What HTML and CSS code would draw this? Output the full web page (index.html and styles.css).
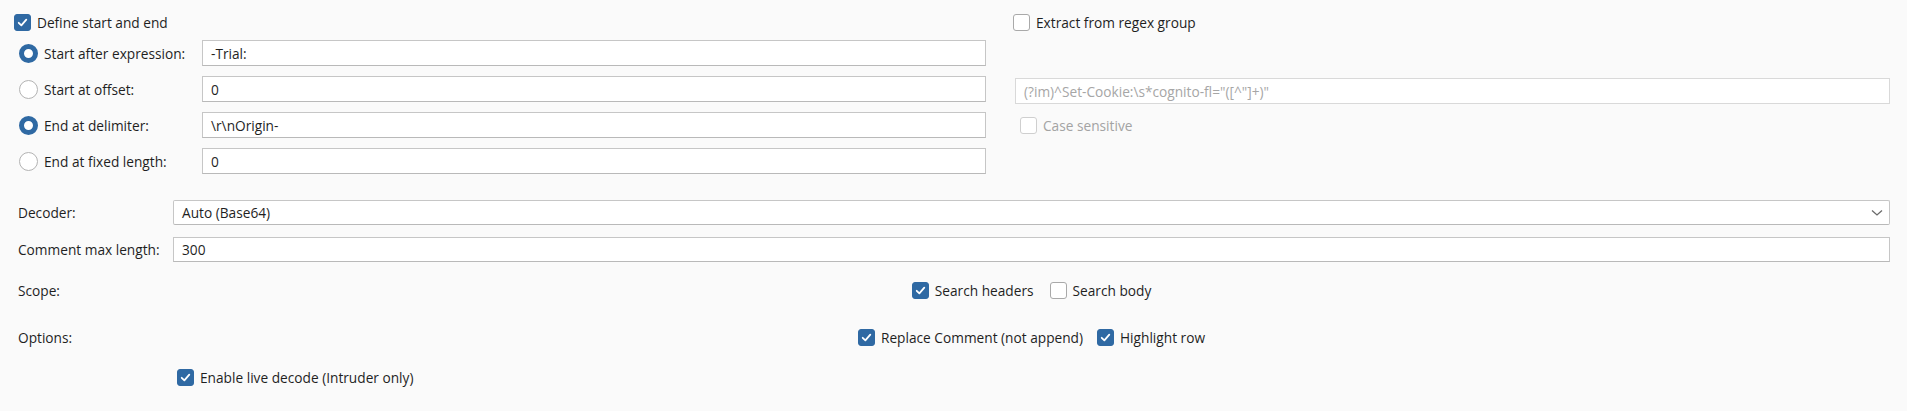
FILE: index.html
```html
<!DOCTYPE html>
<html>
<head>
<meta charset="utf-8">
<link rel="stylesheet" href="styles.css">
</head>
<body>
<div class="panel">
  <div class="top">
    <div class="col-left">
      <div class="check-row head">
        <span class="cb on"><svg viewBox="0 0 17 17"><path d="M4.2 8.8 L7.2 11.8 L12.8 5.2"/></svg></span>
        <span class="lbl">Define start and end</span>
      </div>
      <div class="opt-row">
        <div class="opt"><span class="radio on"></span><span class="lbl">Start after expression:</span></div>
        <div class="field">-Trial:</div>
      </div>
      <div class="opt-row">
        <div class="opt"><span class="radio"></span><span class="lbl">Start at offset:</span></div>
        <div class="field">0</div>
      </div>
      <div class="opt-row">
        <div class="opt"><span class="radio on"></span><span class="lbl">End at delimiter:</span></div>
        <div class="field">\r\nOrigin-</div>
      </div>
      <div class="opt-row">
        <div class="opt"><span class="radio"></span><span class="lbl">End at fixed length:</span></div>
        <div class="field">0</div>
      </div>
    </div>
    <div class="col-right">
      <div class="check-row head">
        <span class="cb"></span>
        <span class="lbl">Extract from regex group</span>
      </div>
      <div class="field disabled regex">(?im)^Set-Cookie:\s*cognito-fl="([^"]+)"</div>
      <div class="check-row case">
        <span class="cb dis"></span>
        <span class="lbl dim">Case sensitive</span>
      </div>
    </div>
  </div>

  <div class="form-row decoder">
    <div class="flabel">Decoder:</div>
    <div class="field select">Auto (Base64)<svg class="chev" viewBox="0 0 12 8"><path d="M1 1.5 L6 6 L11 1.5"/></svg></div>
  </div>
  <div class="form-row comment">
    <div class="flabel">Comment max length:</div>
    <div class="field">300</div>
  </div>
  <div class="form-row scope">
    <div class="flabel">Scope:</div>
    <div class="center-group">
      <div class="check-row"><span class="cb on"><svg viewBox="0 0 17 17"><path d="M4.2 8.8 L7.2 11.8 L12.8 5.2"/></svg></span><span class="lbl">Search headers</span></div>
      <div class="check-row"><span class="cb"></span><span class="lbl">Search body</span></div>
    </div>
  </div>
  <div class="form-row options">
    <div class="flabel">Options:</div>
    <div class="center-group">
      <div class="check-row"><span class="cb on"><svg viewBox="0 0 17 17"><path d="M4.2 8.8 L7.2 11.8 L12.8 5.2"/></svg></span><span class="lbl">Replace Comment (not append)</span></div>
      <div class="check-row"><span class="cb on"><svg viewBox="0 0 17 17"><path d="M4.2 8.8 L7.2 11.8 L12.8 5.2"/></svg></span><span class="lbl">Highlight row</span></div>
    </div>
  </div>
  <div class="form-row live">
    <div class="flabel"></div>
    <div class="check-row"><span class="cb on"><svg viewBox="0 0 17 17"><path d="M4.2 8.8 L7.2 11.8 L12.8 5.2"/></svg></span><span class="lbl">Enable live decode (Intruder only)</span></div>
  </div>
</div>
</body>
</html>
```

FILE: styles.css
```css
* { box-sizing: border-box; }
html, body { margin: 0; padding: 0; }
body {
  background: #fafafa;
  font-family: "Open Sans", "Noto Sans", sans-serif;
  font-size: 13.7px;
  color: #1f1f1f;
  width: 1907px;
  height: 411px;
  overflow: hidden;
}
.panel {
  padding: 14px 17px 0 14px;
}
.top {
  display: flex;
  gap: 27px;
}
.col-left { width: 972px; flex: none; }
.col-right { flex: 1; display: flex; flex-direction: column; align-items: stretch; }

.check-row {
  display: flex;
  align-items: center;
  height: 17px;
}
.check-row .lbl { margin-left: 6px; white-space: nowrap; }

.cb {
  width: 17px;
  height: 17px;
  border-radius: 3px;
  border: 1px solid #a9a9a9;
  background: #fff;
  flex: none;
  display: flex;
}
.cb.on {
  background: #2f69a3;
  border-color: #2f69a3;
}
.cb svg { width: 15px; height: 15px; }
.cb svg path {
  fill: none;
  stroke: #fff;
  stroke-width: 2;
  stroke-linecap: round;
  stroke-linejoin: round;
}
.cb.dis { border-color: #cfcfcf; }
.dim { color: #a3a3a3; }

.head { margin-bottom: 9px; }

.opt-row {
  display: flex;
  align-items: center;
  height: 26px;
  margin-bottom: 10px;
}
.opt {
  display: flex;
  align-items: center;
  width: 188px;
  padding-left: 5px;
  flex: none;
}
.opt .lbl { margin-left: 6px; white-space: nowrap; }
.radio {
  width: 19px;
  height: 19px;
  border-radius: 50%;
  border: 1px solid #b3b3b3;
  background: #fff;
  flex: none;
}
.radio.on {
  border: 5px solid #2f69a3;
  background: #fff;
}

.field {
  flex: 1;
  height: 26px;
  background: #fff;
  border: 1px solid #c6c6c6;
  border-bottom-color: #b9b9b9;
  display: flex;
  align-items: center;
  padding-left: 8px;
  white-space: nowrap;
  color: #1f1f1f;
}
.field.disabled {
  border-color: #d9d9d9;
  color: #a6a6a6;
}
.regex {
  flex: none;
  margin-top: 38px;
  margin-left: 2px;
  height: 26px;
}
.case { margin-top: 13px; margin-left: 7px; }

.form-row {
  display: flex;
  align-items: center;
  padding-left: 4px;
}
.flabel {
  width: 155px;
  flex: none;
  white-space: nowrap;
}
.decoder { margin-top: 16px; height: 25px; }
.decoder .field { height: 25px; border-radius: 2px; position: relative; }
.comment { margin-top: 12px; height: 25px; }
.comment .field { height: 25px; }
.chev {
  position: absolute;
  right: 6px;
  top: 8px;
  width: 12px;
  height: 8px;
}
.chev path { fill: none; stroke: #6b6b6b; stroke-width: 1.3; }

.center-group {
  flex: 1;
  display: flex;
  justify-content: center;
  gap: 16px;
}
.scope { margin-top: 20px; height: 17px; }
.options { margin-top: 30px; height: 17px; }
.options .center-group { gap: 14px; }
.live { margin-top: 23px; height: 17px; }
.live .check-row { margin-left: 4px; }
```
